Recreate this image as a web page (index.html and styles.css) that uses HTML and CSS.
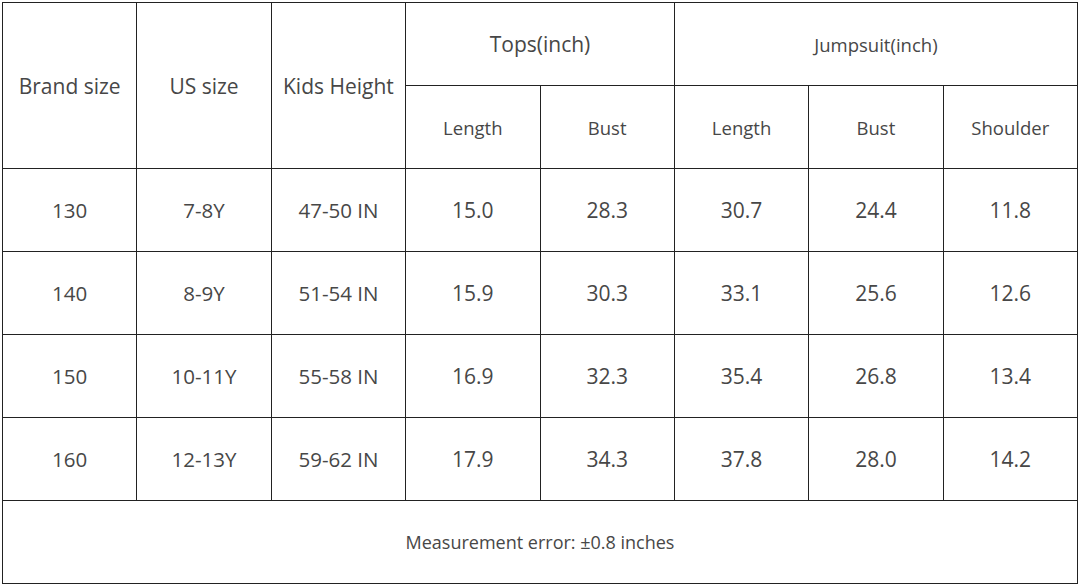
FILE: index.html
```html
<!DOCTYPE html>
<html lang="en">
<head>
<meta charset="utf-8">
<title>Size chart</title>
<link rel="stylesheet" href="styles.css">
</head>
<body>
<table class="chart">
  <colgroup>
    <col><col><col><col><col><col><col><col>
  </colgroup>
  <thead>
    <tr class="row">
      <th rowspan="2" class="hd">Brand size</th>
      <th rowspan="2" class="hd">US size</th>
      <th rowspan="2" class="hd">Kids Height</th>
      <th colspan="2" class="group">Tops(inch)</th>
      <th colspan="3" class="group small">Jumpsuit(inch)</th>
    </tr>
    <tr class="row">
      <th class="sub">Length</th>
      <th class="sub">Bust</th>
      <th class="sub">Length</th>
      <th class="sub">Bust</th>
      <th class="sub">Shoulder</th>
    </tr>
  </thead>
  <tbody>
    <tr class="row">
      <td class="lbl">130</td><td class="lbl">7-8Y</td><td class="lbl">47-50 IN</td>
      <td class="num">15.0</td><td class="num">28.3</td><td class="num">30.7</td><td class="num">24.4</td><td class="num">11.8</td>
    </tr>
    <tr class="row">
      <td class="lbl">140</td><td class="lbl">8-9Y</td><td class="lbl">51-54 IN</td>
      <td class="num">15.9</td><td class="num">30.3</td><td class="num">33.1</td><td class="num">25.6</td><td class="num">12.6</td>
    </tr>
    <tr class="row">
      <td class="lbl">150</td><td class="lbl">10-11Y</td><td class="lbl">55-58 IN</td>
      <td class="num">16.9</td><td class="num">32.3</td><td class="num">35.4</td><td class="num">26.8</td><td class="num">13.4</td>
    </tr>
    <tr class="row">
      <td class="lbl">160</td><td class="lbl">12-13Y</td><td class="lbl">59-62 IN</td>
      <td class="num">17.9</td><td class="num">34.3</td><td class="num">37.8</td><td class="num">28.0</td><td class="num">14.2</td>
    </tr>
    <tr class="row">
      <td colspan="8" class="note">Measurement error: ±0.8 inches</td>
    </tr>
  </tbody>
</table>
</body>
</html>
```
FILE: styles.css
```css
html, body {
  margin: 0;
  padding: 0;
  background: #ffffff;
}

body {
  padding: 2px;
  font-family: "Open Sans", "Noto Sans", sans-serif;
  color: #474747;
}

.chart {
  width: 1076px;
  border-collapse: collapse;
  table-layout: fixed;
}

.chart th,
.chart td {
  border: 1px solid #222222;
  text-align: center;
  vertical-align: middle;
  padding: 0;
  font-weight: 400;
}

.row {
  height: 83px;
}

.hd {
  font-size: 21px;
}

.group {
  font-size: 21px;
}

.group.small {
  font-size: 18.5px;
}

.sub {
  font-size: 18.5px;
}

.lbl {
  font-size: 20.5px;
}

.num {
  font-size: 21px;
}

.note {
  font-size: 18px;
}
```
